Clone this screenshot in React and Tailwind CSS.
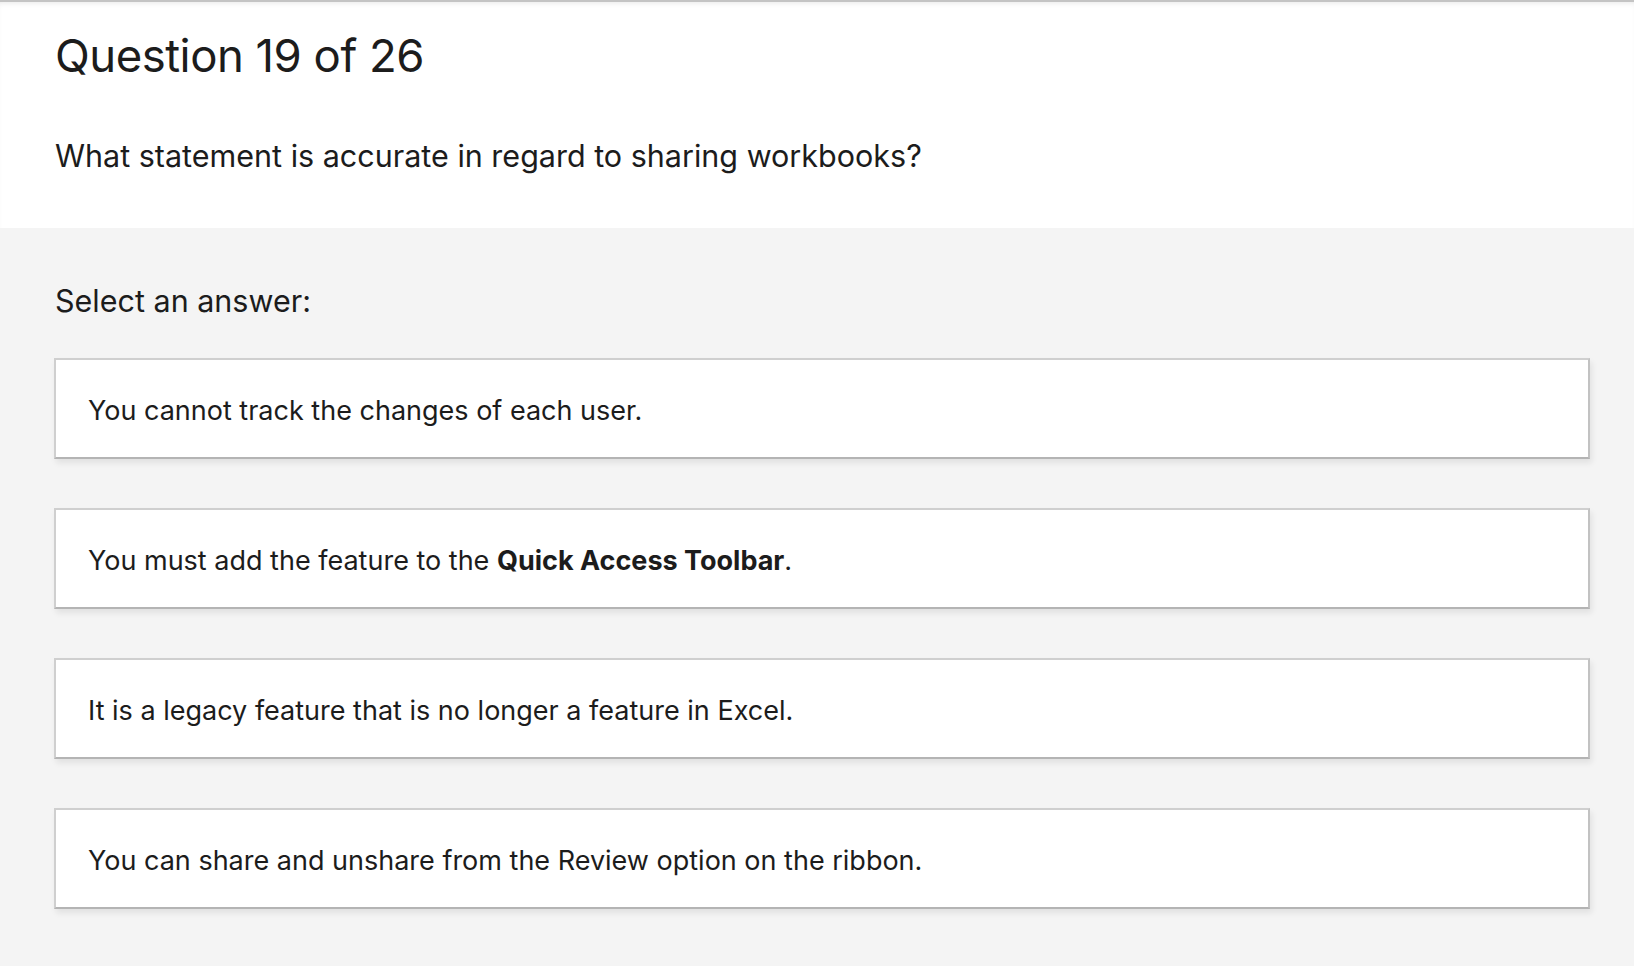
import React from "react";

const answers = [
  { id: 1, text: <>You cannot track the changes of each user.</> },
  {
    id: 2,
    text: (
      <>
        You must add the feature to the <strong className="font-bold">Quick Access Toolbar</strong>.
      </>
    ),
  },
  { id: 3, text: <>It is a legacy feature that is no longer a feature in Excel.</> },
  { id: 4, text: <>You can share and unshare from the Review option on the ribbon.</> },
];

const AnswerCard = ({ children }) => (
  <button
    type="button"
    className="flex h-[101px] w-full items-center border-2 border-[#cfcfcf] border-b-[#b4b4b4] border-r-[#c2c2c2] bg-white pl-[32px] pt-[6px] text-left text-[27px] text-[#1c1c1c] shadow-[2px_4px_6px_rgba(0,0,0,0.08)]"
  >
    <span>{children}</span>
  </button>
);

export default function App() {
  return (
    <div className="min-h-[966px] bg-[#f4f4f4] font-['Inter',sans-serif] text-[#1c1c1c]">
      {/* HEADER */}
      <div className="border-t-2 border-[#c4c4c4] bg-white shadow-[inset_0_4px_6px_-4px_rgba(0,0,0,0.12)]">
        <div className="px-[55px] pb-[52px] pt-[26px]">
          <h1 className="text-[45.5px] leading-[56px] tracking-[-0.5px]">Question 19 of 26</h1>
          <p className="mt-[52px] text-[30.5px] leading-[40px]">
            What statement is accurate in regard to sharing workbooks?
          </p>
        </div>
      </div>

      {/* ANSWERS */}
      <div className="pl-[54px] pr-[44px] pt-[53px] pb-[56px]">
        <p className="pl-[1px] text-[30.5px] leading-[40px]">Select an answer:</p>
        <div className="mt-[37px] flex flex-col gap-[49px]">
          {answers.map((a) => (
            <AnswerCard key={a.id}>{a.text}</AnswerCard>
          ))}
        </div>
      </div>
    </div>
  );
}
